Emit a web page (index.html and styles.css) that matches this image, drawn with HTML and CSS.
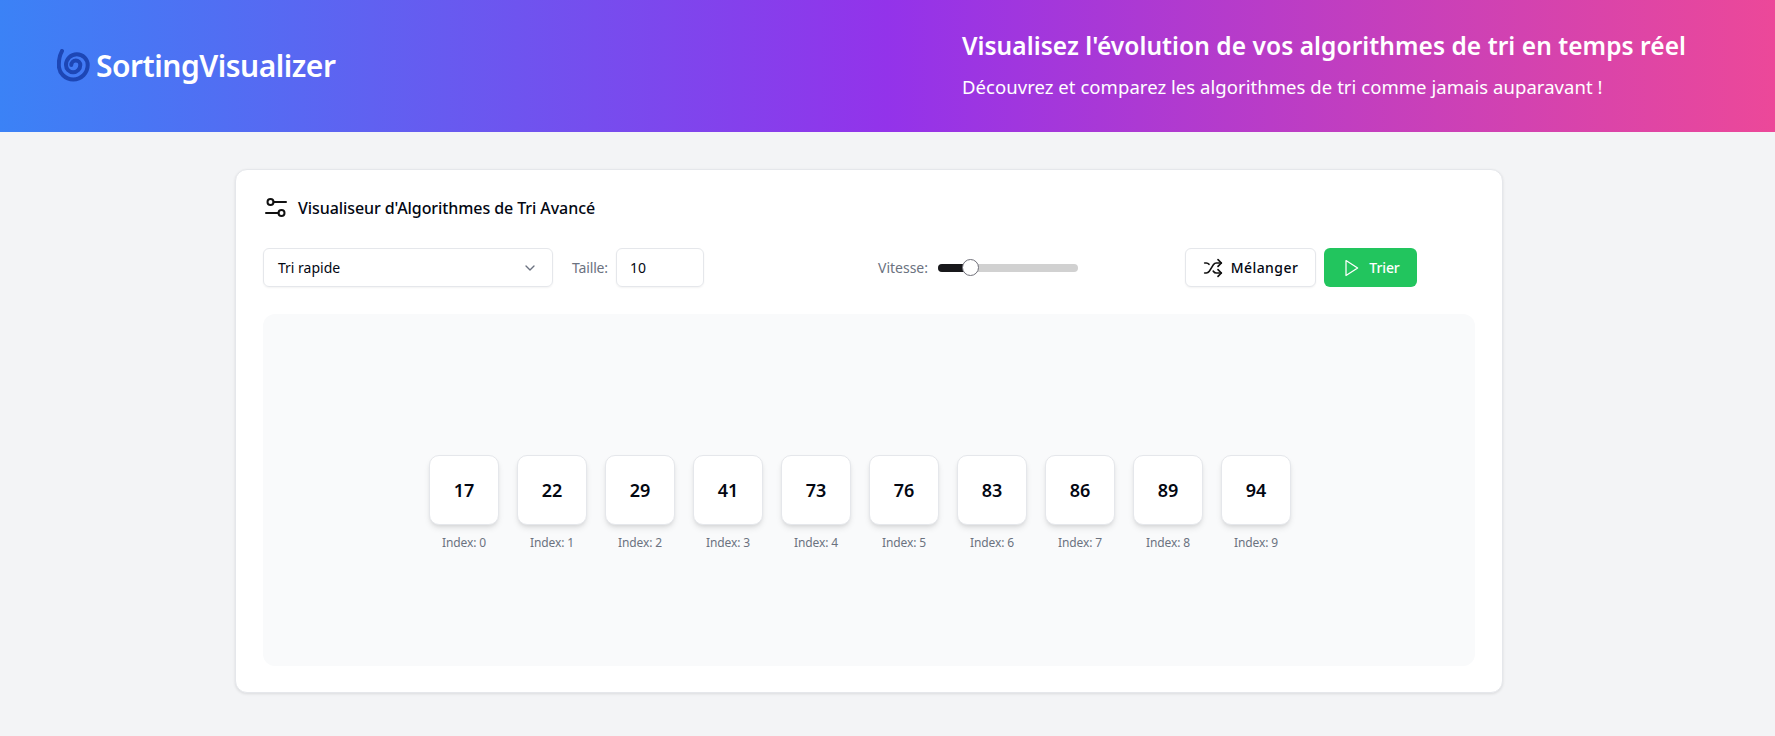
FILE: index.html
```html
<!DOCTYPE html>
<html lang="fr">
<head>
<meta charset="utf-8">
<title>SortingVisualizer</title>
<link rel="stylesheet" href="styles.css">
</head>
<body>
<header class="hero">
  <div class="brand">
    <svg class="brand-icon" viewBox="0 0 34 34" fill="none" stroke="#1d46b5" stroke-width="4" stroke-linecap="round"><path d="M5 2C3 5.500 1.800 10 1.800 16A14.450 14.450 0 0 0 30.700 16A10.850 10.850 0 0 0 9 16A7.150 7.150 0 0 0 23.300 16A4.500 4.500 0 0 0 14.300 16"/></svg>
    <span class="brand-name">SortingVisualizer</span>
  </div>
  <div class="hero-copy">
    <h1 class="hero-title">Visualisez l'évolution de vos algorithmes de tri en temps réel</h1>
    <p class="hero-sub">Découvrez et comparez les algorithmes de tri comme jamais auparavant !</p>
  </div>
</header>
<main class="page">
  <section class="card">
    <div class="card-head">
      <svg class="head-icon" viewBox="0 0 24 24" fill="none" stroke="#111" stroke-width="2" stroke-linecap="round" stroke-linejoin="round"><circle cx="6.500" cy="6" r="3"/><path d="M9.500 6H22"/><circle cx="17.500" cy="17" r="3"/><path d="M14.500 17H2"/></svg>
      <h2 class="card-title">Visualiseur d'Algorithmes de Tri Avancé</h2>
    </div>
    <div class="controls">
      <div class="select">
        <span>Tri rapide</span>
        <svg class="chevron" viewBox="0 0 24 24" fill="none" stroke="#6b7280" stroke-width="2" stroke-linecap="round" stroke-linejoin="round"><path d="m6 9 6 6 6-6"/></svg>
      </div>
      <span class="label label-size">Taille:</span>
      <div class="input">10</div>
      <span class="label label-speed">Vitesse:</span>
      <div class="slider"><div class="slider-fill"></div><div class="slider-thumb"></div></div>
      <button class="btn btn-ghost"><svg class="btn-icon" viewBox="0 0 24 24" fill="none" stroke="#111" stroke-width="2" stroke-linecap="round" stroke-linejoin="round"><path d="m18 14 4 4-4 4"/><path d="m18 2 4 4-4 4"/><path d="M2 18h1.970a4 4 0 0 0 3.300-1.700l5.460-8.600a4 4 0 0 1 3.300-1.700H22"/><path d="M2 6h1.970a4 4 0 0 1 3.200 1.600"/><path d="M22 18h-6.040a4 4 0 0 1-3.300-1.800l-.36-.450"/></svg>Mélanger</button>
      <button class="btn btn-go"><svg class="btn-icon" viewBox="0 0 24 24" fill="none" stroke="#fff" stroke-width="1.500" stroke-linecap="round" stroke-linejoin="round"><path d="M6 3 20 12 6 21z"/></svg>Trier</button>
    </div>
    <div class="stage">
      <div class="cells">
        <div class="cell"><div class="box">17</div><span class="idx">Index: 0</span></div>
        <div class="cell"><div class="box">22</div><span class="idx">Index: 1</span></div>
        <div class="cell"><div class="box">29</div><span class="idx">Index: 2</span></div>
        <div class="cell"><div class="box">41</div><span class="idx">Index: 3</span></div>
        <div class="cell"><div class="box">73</div><span class="idx">Index: 4</span></div>
        <div class="cell"><div class="box">76</div><span class="idx">Index: 5</span></div>
        <div class="cell"><div class="box">83</div><span class="idx">Index: 6</span></div>
        <div class="cell"><div class="box">86</div><span class="idx">Index: 7</span></div>
        <div class="cell"><div class="box">89</div><span class="idx">Index: 8</span></div>
        <div class="cell"><div class="box">94</div><span class="idx">Index: 9</span></div>
      </div>
    </div>
  </section>
</main>
</body>
</html>
```
FILE: styles.css
```css
* { box-sizing: border-box; }
html, body { margin: 0; padding: 0; }
body {
  height: 736px;
  overflow: hidden;
  background: #f3f4f6;
  color: #030712;
  font-family: "Noto Sans", "Open Sans", sans-serif;
}
.hero {
  height: 132px;
  display: flex;
  align-items: center;
  justify-content: space-between;
  padding: 0 87px 0 57px;
  background: linear-gradient(90deg, #3b82f6 0%, #9333ea 50%, #ec4899 100%);
  color: #fff;
}
.brand { display: flex; align-items: center; gap: 5px; }
.brand-icon { width: 34px; height: 34px; }
.brand-name { font-size: 30px; font-weight: 600; letter-spacing: -0.480px; line-height: 40px; }
.hero-copy { width: 726px; margin-bottom: 2px; }
.hero-title { margin: 0; font-size: 24.500px; font-weight: 600; letter-spacing: 0.050px; line-height: 32px; white-space: nowrap; }
.hero-sub { margin: 11px 0 0; font-size: 18.500px; letter-spacing: 0.050px; line-height: 28px; white-space: nowrap; }
.page { padding: 37px 0 0 235px; }
.card {
  width: 1268px;
  height: 524px;
  padding: 27px;
  background: #fff;
  border: 1px solid #e5e7eb;
  border-radius: 12px;
  box-shadow: 0 1px 3px rgba(0, 0, 0, .1);
}
.card-head { display: flex; align-items: center; gap: 10px; height: 22px; }
.head-icon { width: 24px; height: 24px; margin-left: 1px; }
.card-title { margin: 0; font-size: 16px; font-weight: 500; letter-spacing: -0.080px; line-height: 20px; }
.controls { display: flex; align-items: center; height: 39px; margin-top: 29px; }
.select {
  width: 290px;
  height: 39px;
  display: flex;
  align-items: center;
  justify-content: space-between;
  padding: 0 14px;
  border: 1px solid #e5e7eb;
  border-radius: 6px;
  box-shadow: 0 1px 2px rgba(0, 0, 0, .05);
  font-size: 14px;
}
.chevron { width: 16px; height: 16px; }
.label { font-size: 14px; color: #6b7280; }
.label-size { margin-left: 19px; width: 44px; letter-spacing: -0.150px; }
.input {
  width: 88px;
  height: 39px;
  display: flex;
  align-items: center;
  padding: 0 13px;
  border: 1px solid #e5e7eb;
  border-radius: 6px;
  box-shadow: 0 1px 2px rgba(0, 0, 0, .05);
  font-size: 14px;
}
.label-speed { margin-left: 174px; width: 60px; }
.slider { position: relative; width: 140px; height: 8px; border-radius: 4px; background: #d1d1d1; }
.slider-fill { width: 33px; height: 8px; border-radius: 4px 0 0 4px; background: #18181b; }
.slider-thumb {
  position: absolute;
  left: 24px;
  top: -5px;
  width: 17px;
  height: 17px;
  border: 1px solid #71717a;
  border-radius: 50%;
  background: #fff;
}
.btn {
  height: 39px;
  display: flex;
  align-items: center;
  justify-content: center;
  gap: 8px;
  border-radius: 6px;
  font-family: inherit;
  font-size: 14px;
  font-weight: 500;
  padding: 0;
}
.btn-icon { width: 20px; height: 20px; }
.btn-ghost { width: 131px; margin-left: 107px; background: #fff; color: #030712; border: 1px solid #e5e7eb; box-shadow: 0 1px 2px rgba(0, 0, 0, .05); letter-spacing: 0.450px; }
.btn-go { width: 93px; margin-left: 8px; background: #22c55e; color: #fff; border: 0; letter-spacing: -0.100px; }
.stage {
  height: 352px;
  margin-top: 27px;
  display: flex;
  justify-content: center;
  padding: 141px 18px 0 0;
  background: #f9fafb;
  border-radius: 12px;
}
.cells { display: flex; gap: 18px; }
.cell { width: 70px; display: flex; flex-direction: column; align-items: center; }
.box {
  width: 70px;
  height: 70px;
  display: flex;
  align-items: center;
  justify-content: center;
  background: #fff;
  border: 1px solid #e5e7eb;
  border-radius: 10px;
  box-shadow: 0 4px 6px -1px rgba(0, 0, 0, .1), 0 2px 4px -2px rgba(0, 0, 0, .1);
  font-size: 18px;
  font-weight: 600;
}
.idx { margin-top: 10px; font-size: 12px; line-height: 16px; color: #6b7280; letter-spacing: -0.100px; white-space: nowrap; }
```
